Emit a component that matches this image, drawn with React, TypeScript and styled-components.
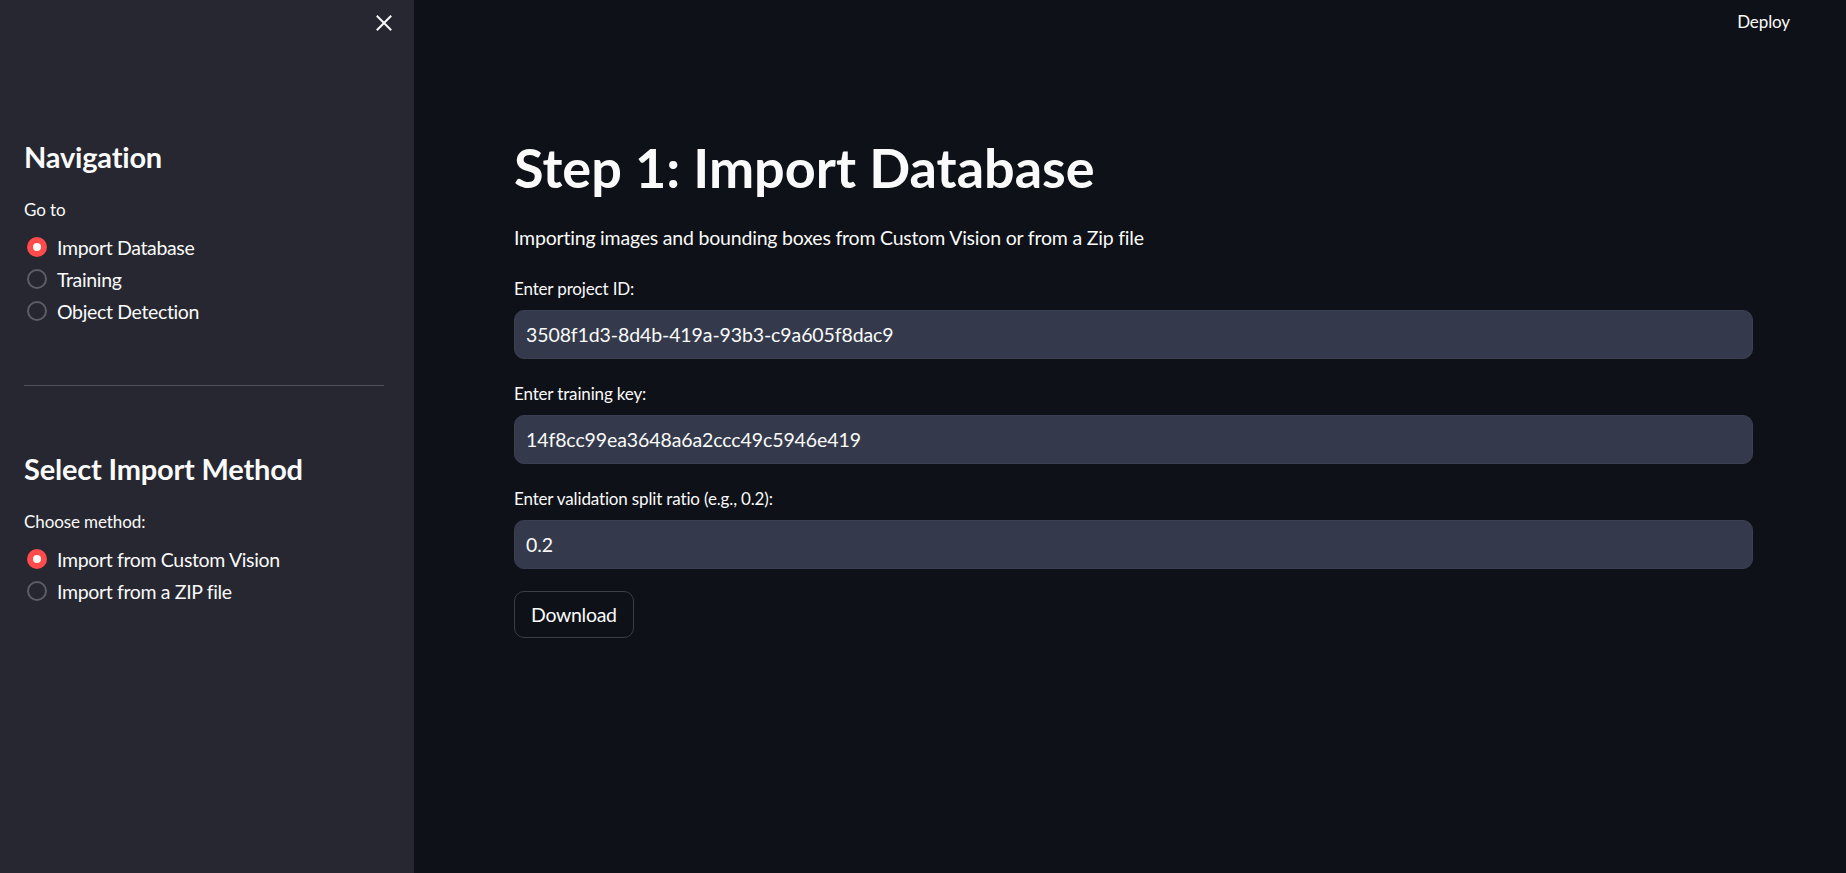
import React from "react";
import styled, { createGlobalStyle } from "styled-components";

const GlobalStyle = createGlobalStyle`
  html, body, #root { margin: 0; padding: 0; height: 100%; }
  body {
    background: #0e1117;
    color: #fafafa;
    font-family: "Lato", "Roboto", sans-serif;
    -webkit-font-smoothing: antialiased;
  }
  * { box-sizing: border-box; }
`;

const Shell = styled.div`
  display: flex;
  width: 100%;
  height: 873px;
  overflow: hidden;
`;

const Sidebar = styled.aside`
  flex: 0 0 414px;
  width: 414px;
  height: 100%;
  background: #262730;
  display: flex;
  flex-direction: column;
`;

const CloseBar = styled.div`
  height: 46px;
  display: flex;
  align-items: center;
  justify-content: flex-end;
  padding-right: 14px;
`;

const CloseButton = styled.button`
  width: 32px;
  height: 32px;
  border: none;
  background: transparent;
  padding: 0;
  display: flex;
  align-items: center;
  justify-content: center;
  color: #fafafa;
  cursor: pointer;
`;

const SidebarContent = styled.div`
  padding: 93px 30px 0 24px;
  display: flex;
  flex-direction: column;
`;

const SideHeading = styled.h2`
  margin: 0;
  font-size: 29px;
  line-height: 36px;
  font-weight: 700;
  color: #fafafa;
  letter-spacing: -0.2px;
`;

const WidgetLabel = styled.div<{ $top?: number }>`
  margin-top: ${(p) => p.$top ?? 20}px;
  height: 30px;
  line-height: 30px;
  font-size: 17px;
  color: #fafafa;
  margin-bottom: 6px;
  letter-spacing: -0.1px;
`;

const RadioGroup = styled.div`
  display: flex;
  flex-direction: column;
`;

const RadioRow = styled.label`
  height: 32px;
  display: flex;
  align-items: center;
  gap: 10px;
  font-size: 19.5px;
  color: #fafafa;
  letter-spacing: -0.35px;
  cursor: pointer;
`;

const RadioCircle = styled.span<{ $checked?: boolean }>`
  width: 20px;
  height: 20px;
  margin-left: 3px;
  border-radius: 50%;
  flex: 0 0 20px;
  display: flex;
  align-items: center;
  justify-content: center;
  background: ${(p) => (p.$checked ? "#ff4b4b" : "transparent")};
  border: ${(p) => (p.$checked ? "none" : "2px solid #5c5d65")};
  &::after {
    content: "";
    display: ${(p) => (p.$checked ? "block" : "none")};
    width: 8px;
    height: 8px;
    border-radius: 50%;
    background: #fafafa;
  }
`;

const Divider = styled.hr`
  border: none;
  border-top: 1px solid #4f5058;
  margin: 58px 0 65px 0;
  width: 100%;
`;

const Main = styled.main`
  flex: 1;
  height: 100%;
  display: flex;
  flex-direction: column;
  background: #0e1117;
`;

const Header = styled.header`
  height: 42px;
  display: flex;
  align-items: center;
  justify-content: flex-end;
  padding-right: 56px;
`;

const DeployButton = styled.span`
  font-size: 17px;
  color: #fafafa;
  letter-spacing: -0.1px;
`;

const Content = styled.div`
  padding: 93px 93px 0 100px;
  display: flex;
  flex-direction: column;
`;

const Title = styled.h1`
  margin: 0;
  font-size: 54px;
  line-height: 66px;
  font-weight: 700;
  color: #fafafa;
  letter-spacing: 0;
`;

const Subtitle = styled.p`
  margin: 21px 0 0 0;
  font-size: 19.5px;
  line-height: 32px;
  color: #fafafa;
  letter-spacing: -0.2px;
`;

const Field = styled.div`
  display: flex;
  flex-direction: column;
  margin-top: 20px;
`;

const FieldLabel = styled.div`
  height: 30px;
  line-height: 30px;
  font-size: 17px;
  color: #fafafa;
  margin-bottom: 6px;
  letter-spacing: -0.15px;
`;

const TextInput = styled.input`
  height: 49px;
  width: 100%;
  background: #343a4b;
  border: 1px solid #3a4052;
  border-radius: 10px;
  padding: 0 11px;
  color: #fafafa;
  font-family: "Lato", "Roboto", sans-serif;
  font-size: 19.5px;
  letter-spacing: -0.1px;
  outline: none;
`;

const ActionButton = styled.button`
  margin-top: 22px;
  align-self: flex-start;
  height: 47px;
  padding: 0 16px;
  background: #0e1117;
  border: 1px solid #3c3e45;
  border-radius: 10px;
  color: #fafafa;
  font-family: "Lato", "Roboto", sans-serif;
  font-size: 19.5px;
  letter-spacing: -0.3px;
  cursor: pointer;
`;

const Radio: React.FC<{ label: string; checked?: boolean }> = ({ label, checked }) => (
  <RadioRow>
    <RadioCircle $checked={checked} />
    {label}
  </RadioRow>
);

export default function App() {
  return (
    <>
      <GlobalStyle />
      <Shell>
        <Sidebar>
          <CloseBar>
            <CloseButton aria-label="Close sidebar">
              <svg width="16" height="16" viewBox="0 0 16 16" fill="none">
                <path d="M1.5 1.5L14.5 14.5M14.5 1.5L1.5 14.5" stroke="#fafafa" strokeWidth="2" strokeLinecap="square" />
              </svg>
            </CloseButton>
          </CloseBar>
          <SidebarContent>
            <SideHeading>Navigation</SideHeading>
            <WidgetLabel>Go to</WidgetLabel>
            <RadioGroup>
              <Radio label="Import Database" checked />
              <Radio label="Training" />
              <Radio label="Object Detection" />
            </RadioGroup>
            <Divider />
            <SideHeading>Select Import Method</SideHeading>
            <WidgetLabel>Choose method:</WidgetLabel>
            <RadioGroup>
              <Radio label="Import from Custom Vision" checked />
              <Radio label="Import from a ZIP file" />
            </RadioGroup>
          </SidebarContent>
        </Sidebar>
        <Main>
          <Header>
            <DeployButton>Deploy</DeployButton>
          </Header>
          <Content>
            <Title>Step 1: Import Database</Title>
            <Subtitle>Importing images and bounding boxes from Custom Vision or from a Zip file</Subtitle>
            <Field>
              <FieldLabel>Enter project ID:</FieldLabel>
              <TextInput readOnly value="3508f1d3-8d4b-419a-93b3-c9a605f8dac9" />
            </Field>
            <Field>
              <FieldLabel>Enter training key:</FieldLabel>
              <TextInput readOnly value="14f8cc99ea3648a6a2ccc49c5946e419" />
            </Field>
            <Field>
              <FieldLabel>Enter validation split ratio (e.g., 0.2):</FieldLabel>
              <TextInput readOnly value="0.2" />
            </Field>
            <ActionButton>Download</ActionButton>
          </Content>
        </Main>
      </Shell>
    </>
  );
}
